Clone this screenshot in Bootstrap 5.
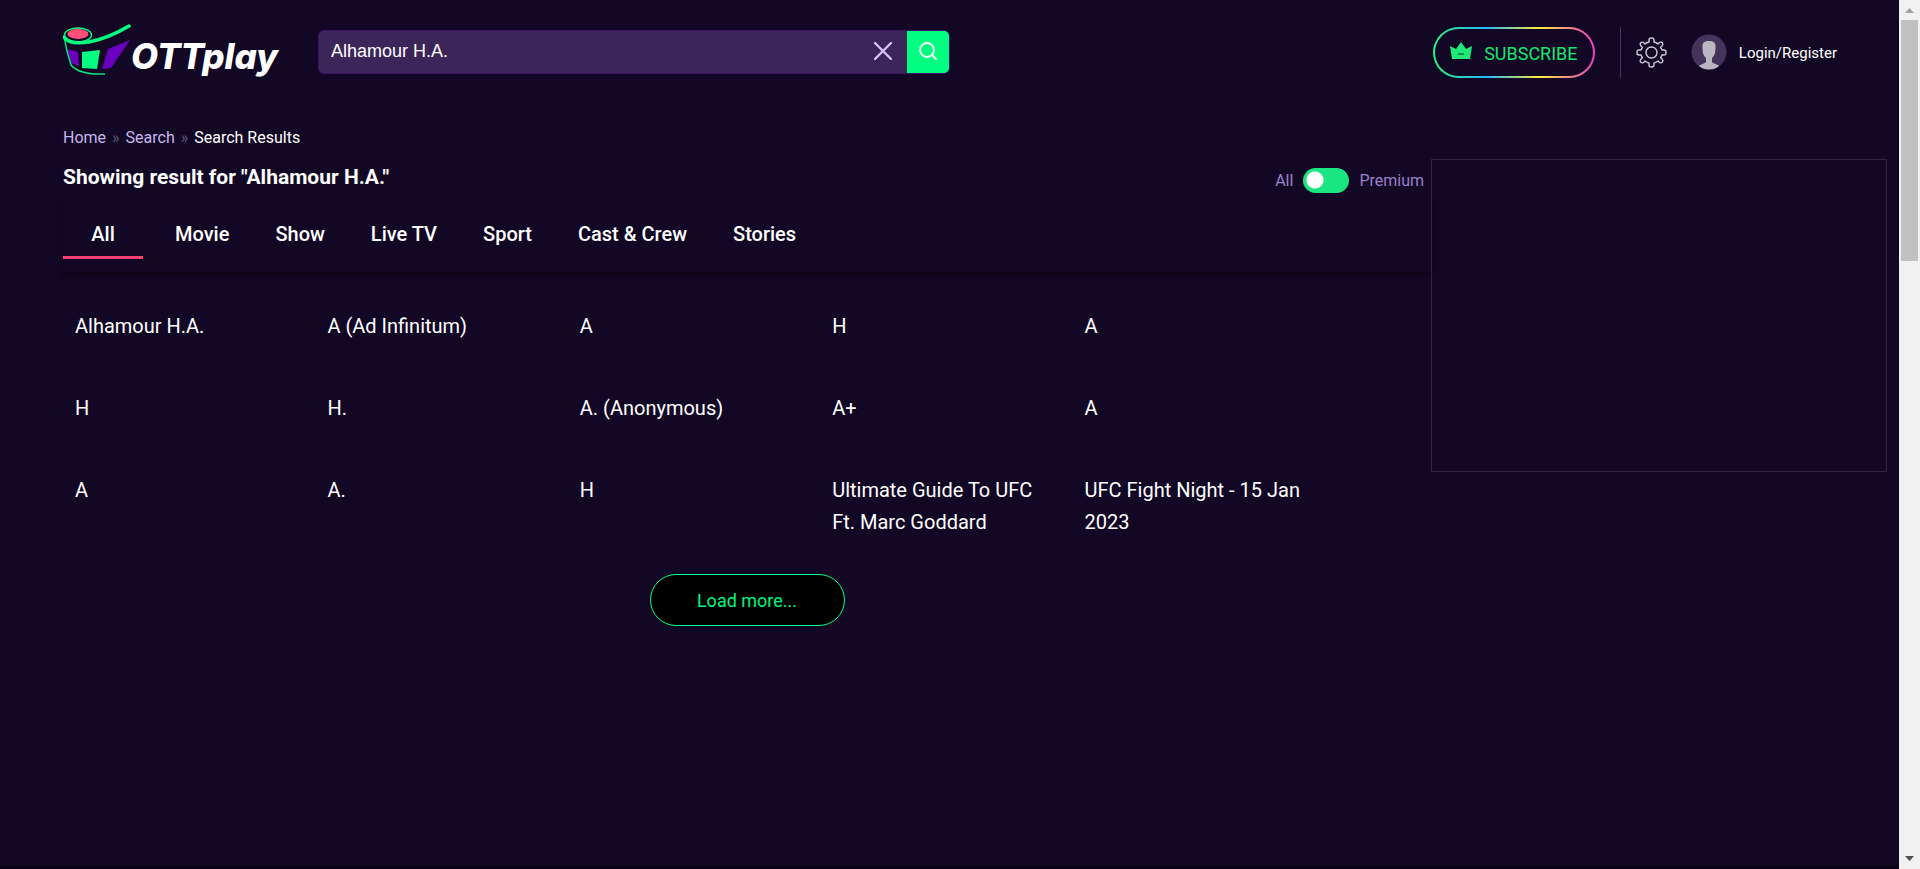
<!DOCTYPE html>
<html lang="en">
<head>
<meta charset="utf-8">
<meta name="viewport" content="width=device-width, initial-scale=1">
<title>Search Results - OTTplay</title>
<link href="https://cdn.jsdelivr.net/npm/bootstrap@5.3.0/dist/css/bootstrap.min.css" rel="stylesheet">
<style>
  body { background: #120724; color: #fff; font-family: Roboto, "Liberation Sans", sans-serif; }
  a { color: inherit; text-decoration: none; }
  .page-body { padding-left: 63px; min-width: 0; border-bottom: 4px solid #0b0416; }
  .site-header { height: 104px; padding-right: 62px; }
  .brand { width: 217px; }
  .brand svg { margin-bottom: 5px; }
  .brand-text { font: italic 800 35px/48px Inter, "Open Sans", sans-serif; padding-top: 8px; }
  .search-form { width: 632px; height: 44px; margin-left: 38px; border: 1px solid #3a1768; border-radius: 6px; background: #3b2559; overflow: hidden; }
  .search-form input { color: #fff; background: none; border: 0; outline: 0; padding: 0 12px 3px; min-width: 0; font: 18px/24px "Liberation Sans", sans-serif; }
  .search-form button { border: 0; padding: 0 0 3px; background: none; }
  .search-form .clear-btn { width: 48px; }
  .search-form .go-btn { width: 42px; background: #00ff80; }
  .subscribe-btn { width: 162px; height: 51px; border: 2px solid transparent; border-radius: 26px; color: #14e86f; font-size: 18px; gap: 12px;
    background: linear-gradient(#120724, #120724) padding-box, linear-gradient(90deg, #2ef07c, #29b6f6 33%, #ffeb3b 66%, #f03cc8) border-box; }
  .subscribe-btn span { padding-top: 2px; }
  .head-rule { width: 1px; height: 51px; background: #41365a; margin: 0 15px 0 25px; }
  .account { gap: 12px; font-size: 15px; line-height: 24px; }
  .account span { padding-top: 2px; }
  .crumbs { font-size: 16px; line-height: 24px; padding: 22px 0 1px; color: #c9b6ee; gap: 6px; }
  .crumbs .sep { color: #65587c; }
  .result-title { font-size: 21px; line-height: 28px; font-weight: 700; margin: 0; padding: 12px 0 4px; }
  .filter { gap: 10px; font-size: 16px; line-height: 24px; color: #9b80cb; padding: 16px 7px 0 0; }
  .filter input { appearance: none; margin: 0 0 2px; width: 46px; height: 25px; border-radius: 13px; background: radial-gradient(circle at 12px 12px, #fff 8px, #19e680 9px); }
  .tabs { height: 77px; box-shadow: 0 5px 4px -1px #0e051c; padding-top: 17px; }
  .tabs a { font-size: 20px; line-height: 32px; font-weight: 500; margin-right: 46px; height: 47px; padding-top: 6px; }
  .tabs a.active { width: 80px; margin-right: 32px; text-align: center; border-bottom: 3px solid #ff4070; }
  .results { padding: 38px 106px 0 0; }
  .results a { display: block; font-size: 20px; line-height: 32px; padding: 0 20px 0 12px; margin-bottom: 50px; }
  .load-btn { width: 195px; height: 52px; border: 1px solid #00ff80; border-radius: 26px; background: #000; color: #00f57a; font-size: 18px; margin-top: -14px; }
  .ad-slot { height: 313px; border: 1px solid #30263f; }
  .scroll-rail { width: 21px; background: #f1f1f1; padding: 8px 2px; }
  .scroll-thumb { width: 17px; height: 241px; background: #c1c1c1; margin-top: 7px; }
</style>
</head>
<body>
<div class="d-flex min-vh-100">
  <div class="page-body flex-grow-1">
    <header class="site-header d-flex align-items-center">
      <a href="#" class="brand d-flex align-items-center" aria-label="OTTplay">
        <svg class="flex-shrink-0" width="68" height="55" viewBox="0 0 68 55" fill="none">
          <path d="M4 27l11 3 1 14-8-3z" fill="#6a00bd"/>
          <path d="M19 30l18-2-3 19-15-1z" fill="#00ff80"/>
          <path d="M45 27l22-9-19 28-9 1z" fill="#6a00bd"/>
          <path d="M1 14Q3 28 8 43Q16 53 42 52" stroke="#00e878" stroke-width="1.500"/>
          <ellipse cx="15" cy="13" rx="13.500" ry="7" stroke="#00ff80" stroke-width="1.500"/>
          <ellipse cx="15" cy="12" rx="10.500" ry="5" fill="#ff5078"/>
          <path d="M1 15Q6 23 26 20Q46 16 66 4" stroke="#00ff80" stroke-width="3.500" stroke-linecap="round"/>
        </svg>
        <span class="brand-text">OTTplay</span>
      </a>
      <form class="search-form d-flex" role="search">
        <input class="flex-grow-1" type="text" value="Alhamour H.A." aria-label="Search">
        <button type="button" class="clear-btn" aria-label="Clear"><svg width="18" height="18" viewBox="0 0 18 18" stroke="#d5c3f5" stroke-width="2.400" stroke-linecap="round"><path d="M1 1l16 16M17 1L1 17"/></svg></button>
        <button type="submit" class="go-btn" aria-label="Search"><svg width="18" height="18" viewBox="0 0 18 18" fill="none" stroke="#fff" stroke-width="1.800" stroke-linecap="round"><circle cx="8" cy="8" r="7"/><path d="M13 13l4 4"/></svg></button>
      </form>
      <button type="button" class="subscribe-btn d-flex align-items-center justify-content-center ms-auto p-0">
        <svg class="mb-1" width="22" height="18" viewBox="0 0 22 18"><path d="M0 5l6 3 5-7 5 7 6-3-2 13H2z" fill="#1fea77"/><path d="M8 13h6" stroke="#0b7a3a" stroke-width="1.500"/></svg>
        <span>SUBSCRIBE</span>
      </button>
      <div class="head-rule"></div>
      <button type="button" class="btn p-0 border-0 d-flex" aria-label="Settings">
        <svg width="31" height="31" viewBox="-15.500 -15.500 31 31" fill="none" stroke="#cfcad8" stroke-width="1.400" stroke-linejoin="round"><circle r="5.500"/><path d="M-2.500-12.500Q-2.500-14.500 0-14.500Q2.500-14.500 2.500-12.500V-10.500Q5-10 6.500-8.500L8-10Q9.500-11 11-9.500Q12-8 10.500-6.500L9-5Q10-4 10.500-2.500H12.500Q14.500-2.500 14.500 0Q14.500 2.500 12.500 2.500H10.500Q10 4 9 5L10.500 6.500Q12 8 11 9.500Q9.500 11 8 10L6.500 8.500Q5 10 2.500 10.500V12.500Q2.500 14.500 0 14.500Q-2.500 14.500-2.500 12.500V10.500Q-5 10-6.500 8.500L-8 10Q-9.500 11-11 9.500Q-12 8-10.500 6.500L-9 5Q-10 4-10.500 2.500H-12.500Q-14.500 2.500-14.500 0Q-14.500-2.500-12.500-2.500H-10.500Q-10-4-9-5L-10.500-6.500Q-12-8-11-9.500Q-9.500-11-8-10L-6.500-8.500Q-5-10-2.500-10.500z"/></svg>
      </button>
      <a href="#" class="account d-flex align-items-center ms-4">
        <svg width="36" height="36" viewBox="0 0 36 36"><defs><clipPath id="face"><circle cx="18" cy="18" r="17.500"/></clipPath></defs><g clip-path="url(#face)"><path d="M0 0h36v36H0z" fill="#44345c"/><path d="M18 7c5 0 7 2 6.500 7 0 5-1 8-3.500 10v4c2 2 6 2 8 5v4H7v-4c2-3 6-3 8-5v-4c-2.500-2-3.500-5-3.500-10C11 9 13 7 18 7z" fill="#bbb6c2"/></g></svg>
        <span>Login/Register</span>
      </a>
    </header>

    <main class="pe-2 me-1">
      <nav class="crumbs d-flex" aria-label="Breadcrumb">
        <a href="#">Home</a><span class="sep">»</span><a href="#">Search</a><span class="sep">»</span><span class="text-white">Search Results</span>
      </nav>
      <div class="row g-0">
        <section class="col-9">
          <div class="d-flex justify-content-between">
            <h1 class="result-title">Showing result for "Alhamour H.A."</h1>
            <div class="filter d-flex align-items-center">
              <span>All</span><input type="checkbox" role="switch" id="premium"><label for="premium">Premium</label>
            </div>
          </div>
          <nav class="tabs d-flex" aria-label="Result type">
            <a href="#" class="active">All</a><a href="#">Movie</a><a href="#">Show</a><a href="#">Live TV</a><a href="#">Sport</a><a href="#">Cast &amp; Crew</a><a href="#">Stories</a>
          </nav>
          <div class="results">
            <div class="row row-cols-5 g-0">
              <div class="col"><a href="#">Alhamour H.A.</a></div>
              <div class="col"><a href="#">A (Ad Infinitum)</a></div>
              <div class="col"><a href="#">A</a></div>
              <div class="col"><a href="#">H</a></div>
              <div class="col"><a href="#">A</a></div>
              <div class="col"><a href="#">H</a></div>
              <div class="col"><a href="#">H.</a></div>
              <div class="col"><a href="#">A. (Anonymous)</a></div>
              <div class="col"><a href="#">A+</a></div>
              <div class="col"><a href="#">A</a></div>
              <div class="col"><a href="#">A</a></div>
              <div class="col"><a href="#">A.</a></div>
              <div class="col"><a href="#">H</a></div>
              <div class="col"><a href="#">Ultimate Guide To UFC Ft. Marc Goddard</a></div>
              <div class="col"><a href="#">UFC Fight Night - 15 Jan 2023</a></div>
            </div>
          </div>
          <div class="text-center"><button type="button" class="load-btn">Load more...</button></div>
        </section>
        <aside class="col-3"><div class="ad-slot mt-2"></div></aside>
      </div>
    </main>
  </div>
  <div class="scroll-rail d-flex flex-column align-items-center" aria-hidden="true">
    <svg width="9" height="5" viewBox="0 0 9 5"><path d="M0 5l4.500-5L9 5z" fill="#a3a3a3"/></svg>
    <div class="scroll-thumb"></div>
    <svg class="mt-auto" width="9" height="5" viewBox="0 0 9 5"><path d="M0 0l4.500 5L9 0z" fill="#505050"/></svg>
  </div>
</div>
<script src="https://cdn.jsdelivr.net/npm/bootstrap@5.3.0/dist/js/bootstrap.bundle.min.js"></script>
</body>
</html>
